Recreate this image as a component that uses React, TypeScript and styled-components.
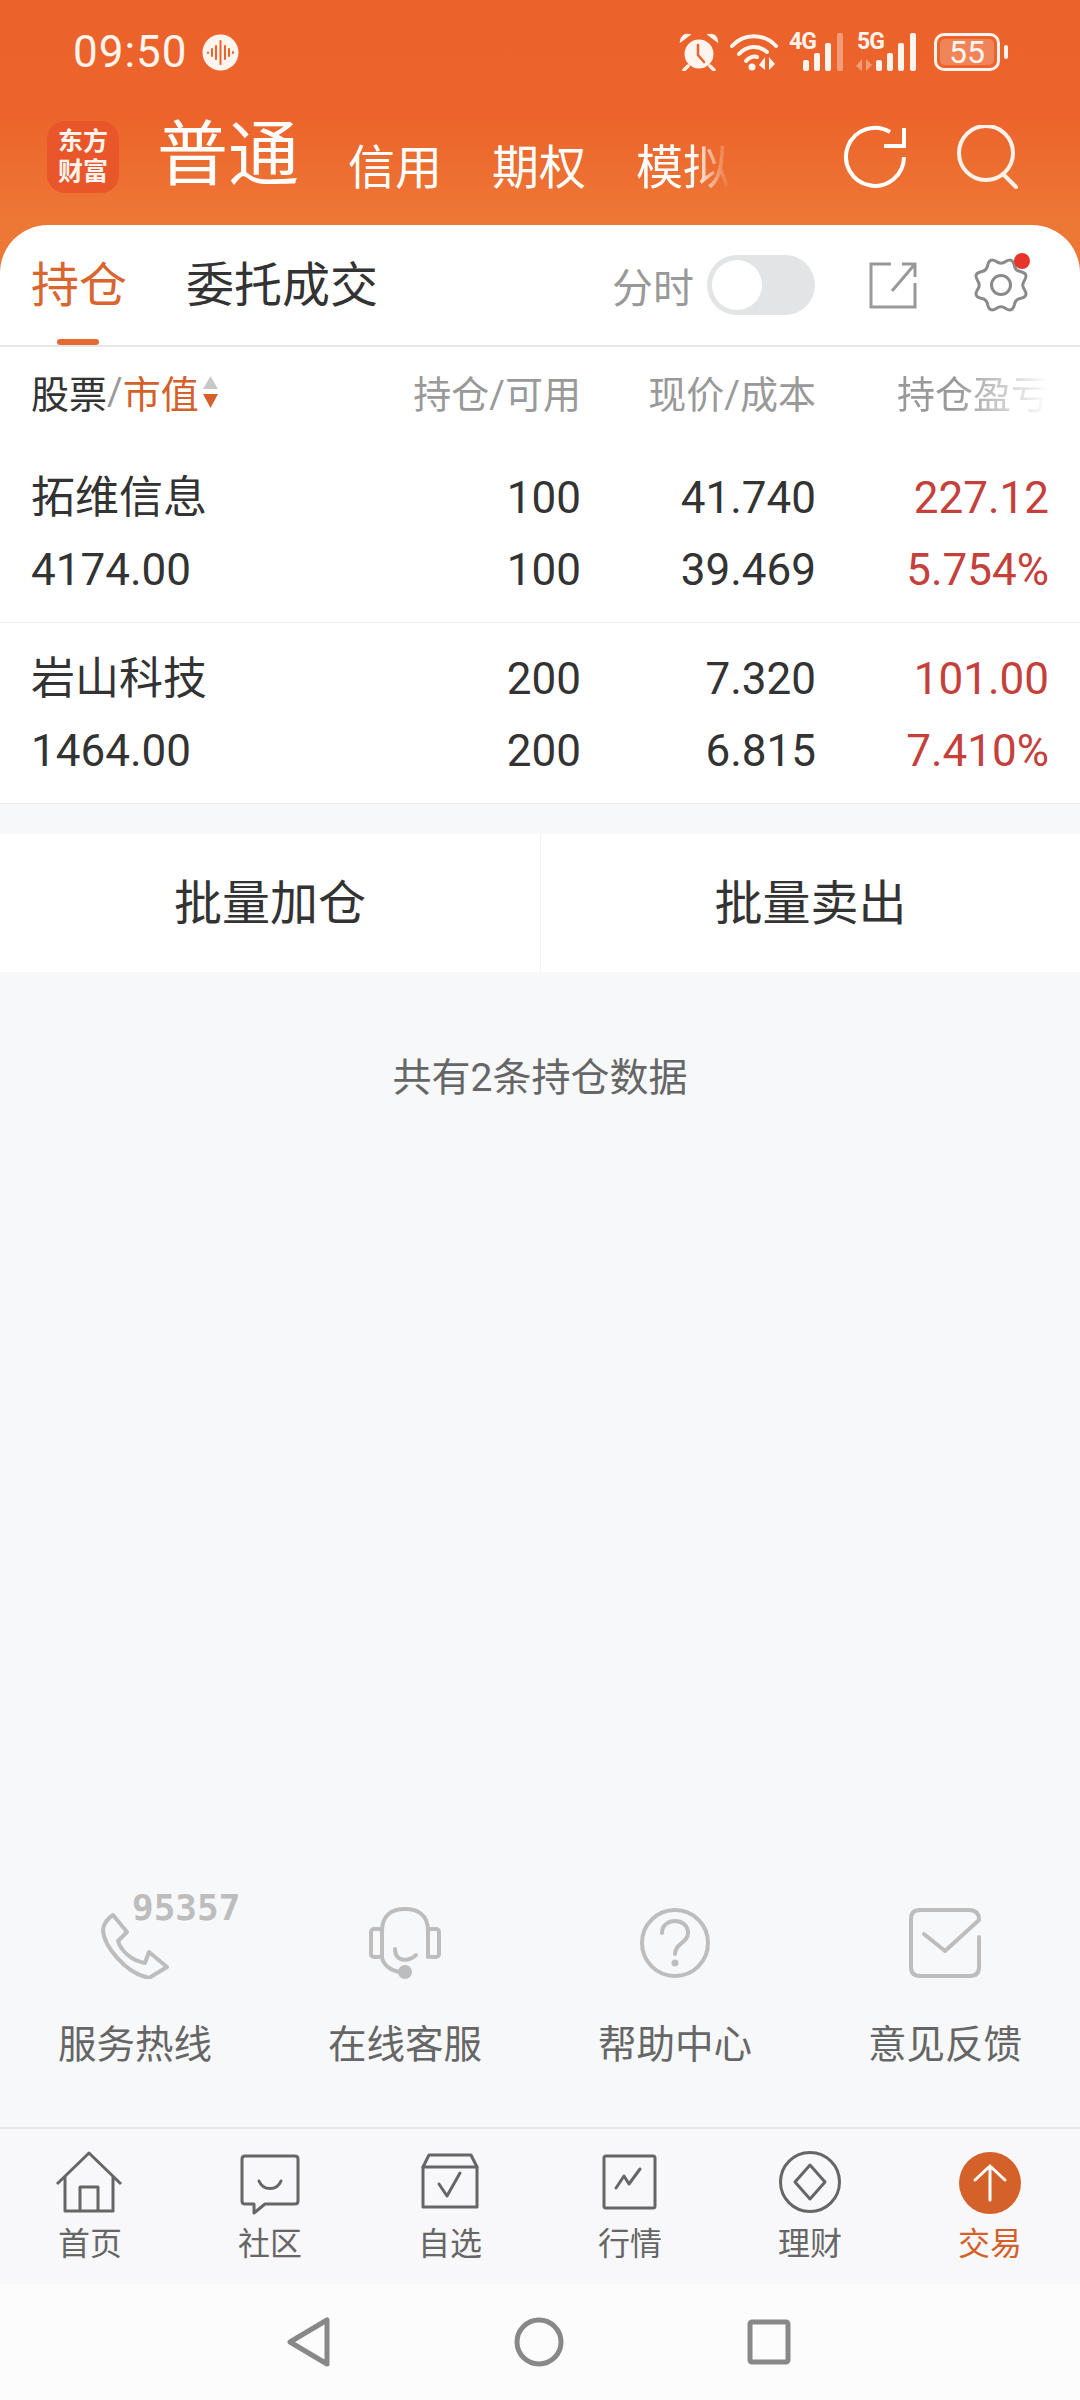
import styled, { createGlobalStyle } from 'styled-components';

const GlobalStyle = createGlobalStyle`
  * { box-sizing: border-box; }
  body {
    margin: 0;
    font-family: Roboto, "Noto Sans CJK SC", sans-serif;
    background: #f7f8fa;
  }
`;

const holdings = [
  { name: '拓维信息', value: '4174.00', hold: '100', free: '100', price: '41.740', cost: '39.469', profit: '227.12', pct: '5.754%' },
  { name: '岩山科技', value: '1464.00', hold: '200', free: '200', price: '7.320', cost: '6.815', profit: '101.00', pct: '7.410%' },
];

// wavy gear outline, notch at the top like the reference
const gearPath = () => {
  const n = 16;
  const pt = (i: number, r: number) => {
    const a = (i * Math.PI * 2) / n - Math.PI / 2;
    return `${(28 + r * Math.cos(a)).toFixed(1)} ${(28 + r * Math.sin(a)).toFixed(1)}`;
  };
  let d = `M${pt(-0.5, 24)}`;
  for (let i = 0; i < n; i++) {
    d += ` Q${pt(i, i % 2 === 0 ? 20 : 30)} ${pt(i + 0.5, 24)}`;
  }
  return d + ' Z';
};

const PhoneIcon = () => (
  <svg width="72" height="72" viewBox="0 0 72 72" fill="none" stroke="#bdbdbd" strokeWidth="4" strokeLinejoin="round">
    <path d="M14 8 L28 25 L19 34 C22 44 33 54 46 56 L50 45 L68 60 L50 71 C26 66 4 38 4 22 Q6 13 14 8 Z" />
  </svg>
);

const HeadsetIcon = () => (
  <svg width="72" height="72" viewBox="0 0 72 72" fill="none" stroke="#bdbdbd" strokeWidth="4" strokeLinecap="round">
    <rect x="2" y="22" width="11" height="28" rx="3" />
    <rect x="59" y="22" width="11" height="28" rx="3" />
    <path d="M13 50 V24 C13 8 23 2 36 2 C49 2 59 8 59 24 V50" />
    <path d="M26 42 C26 54 38 56 47 48" />
    <path d="M13 50 C14 58 22 64 32 65" />
    <circle cx="36" cy="65" r="7" fill="#bdbdbd" stroke="none" />
  </svg>
);

const HelpIcon = () => (
  <svg width="72" height="72" viewBox="0 0 72 72" fill="none" stroke="#bdbdbd" strokeWidth="4" strokeLinecap="round">
    <circle cx="36" cy="36" r="33" />
    <path d="M23 26 C23 10 49 10 49 26 C49 36 36 36 36 47" />
    <circle cx="36" cy="56" r="3.5" fill="#bdbdbd" stroke="none" />
  </svg>
);

const MailIcon = () => (
  <svg width="72" height="72" viewBox="0 0 72 72" fill="none" stroke="#bdbdbd" strokeWidth="4" strokeLinecap="round" strokeLinejoin="round">
    <path d="M70 30 V60 Q70 69 61 69 H11 Q2 69 2 60 V12 Q2 3 11 3 H60 Q70 3 70 13 L36 44 L15 27" />
  </svg>
);

const HomeIcon = () => (
  <svg width="70" height="66" viewBox="0 0 70 66" fill="none" stroke="#666" strokeWidth="3" strokeLinejoin="round">
    <path d="M2 33 L34 2 L66 33" />
    <path d="M10 26 V60 H58 V26" />
    <path d="M25 60 V36 H43 V60" />
  </svg>
);

const ChatIcon = () => (
  <svg width="70" height="66" viewBox="0 0 70 66" fill="none" stroke="#666" strokeWidth="3" strokeLinejoin="round" strokeLinecap="round">
    <path d="M10 5 H60 Q63 5 63 8 V50 Q63 53 60 53 H30 L19 62 V53 H10 Q7 53 7 50 V8 Q7 5 10 5 Z" />
    <path d="M24 30 C28 40 42 40 46 30" />
  </svg>
);

const BoxIcon = () => (
  <svg width="70" height="66" viewBox="0 0 70 66" fill="none" stroke="#666" strokeWidth="3" strokeLinejoin="round" strokeLinecap="round">
    <path d="M8 16 L14 4 H56 L62 16 V56 H8 Z" />
    <path d="M8 16 H62" />
    <path d="M24 33 L32 45 L45 22" />
  </svg>
);

const ChartIcon = () => (
  <svg width="70" height="66" viewBox="0 0 70 66" fill="none" stroke="#666" strokeWidth="3" strokeLinejoin="round" strokeLinecap="round">
    <rect x="9" y="5" width="51" height="52" rx="2" />
    <path d="M21 37 L29 25 L34 33 L45 18" />
  </svg>
);

const FinanceIcon = () => (
  <svg width="70" height="66" viewBox="0 0 70 66" fill="none" stroke="#666" strokeWidth="3" strokeLinejoin="round">
    <circle cx="35" cy="31" r="29.5" />
    <path d="M35 14 L50 31 L35 48 L20 31 Z" />
  </svg>
);

const TradeIcon = () => (
  <svg width="70" height="66" viewBox="0 0 70 66" fill="none" stroke="#fff" strokeWidth="3" strokeLinecap="round">
    <circle cx="35" cy="32" r="31" fill="#d4602a" stroke="none" />
    <path d="M35 49 V15 M20 29 L35 15 L50 29" />
  </svg>
);

const services = [
  { label: '服务热线', icon: <PhoneIcon />, badge: '95357' },
  { label: '在线客服', icon: <HeadsetIcon /> },
  { label: '帮助中心', icon: <HelpIcon /> },
  { label: '意见反馈', icon: <MailIcon /> },
];

const tabs = [
  { label: '首页', icon: <HomeIcon /> },
  { label: '社区', icon: <ChatIcon /> },
  { label: '自选', icon: <BoxIcon /> },
  { label: '行情', icon: <ChartIcon /> },
  { label: '理财', icon: <FinanceIcon /> },
  { label: '交易', icon: <TradeIcon />, active: true },
];

const App = () => {
  return (
    <Page>
      <GlobalStyle />
      <Hero>
        <StatusBar>
          <Clock>09:50</Clock>
          <svg width="37" height="37" viewBox="0 0 37 37">
            <circle cx="18.5" cy="18.5" r="18" fill="#fff4ee" />
            <path d="M6 18.5 V19 M10 15 V22 M14 12 V25 M18.5 7 V30 M23 12 V25 M27 15 V22 M31 18 V19" stroke="#ec622b" strokeWidth="2" strokeLinecap="round" />
          </svg>
          <StatusIcons>
            <svg width="42" height="38" viewBox="0 0 42 38" fill="#fff4ee" stroke="#fff4ee" strokeLinecap="round">
              <circle cx="21" cy="21" r="14.5" stroke="none" />
              <path d="M3 8 Q4 1 11 2 Z M39 8 Q38 1 31 2 Z" strokeWidth="2" />
              <path d="M10 33 L6 37 M32 33 L36 37" strokeWidth="3.5" fill="none" />
              <path d="M20 12 V22 L26 29" stroke="#ec622b" strokeWidth="2.5" fill="none" />
            </svg>
            <svg width="48" height="38" viewBox="0 0 48 38" fill="none" stroke="#fff4ee" strokeWidth="4" strokeLinecap="round">
              <path d="M2 13 C14 0 34 0 46 13" />
              <path d="M9 21 C17 12 29 12 37 19" />
              <path d="M16 28 C19 24 24 23 27 24" />
              <circle cx="22" cy="34" r="3.5" fill="#fff4ee" stroke="none" />
              <path d="M35 24 V37 L29 32 Z M39 24 V37 L45 31 Z" fill="#fff4ee" stroke="none" />
            </svg>
            <Signal $gap={14}>
              <SignalLabel $left={-13}>4G</SignalLabel>
              <svg width="44" height="38" viewBox="0 0 44 38" fill="#fff4ee">
                <rect x="1" y="27" width="6" height="11" rx="2" />
                <rect x="12" y="20" width="6" height="18" rx="2" />
                <rect x="23" y="10" width="6" height="28" rx="2" />
                <rect x="35" y="0" width="6" height="38" rx="2" opacity="0.4" />
              </svg>
            </Signal>
            <Signal $gap={0}>
              <SignalLabel $left={1}>5G</SignalLabel>
              <svg width="62" height="38" viewBox="0 0 62 38" fill="#fff4ee">
                <path d="M6 26 V38 L0 33 Z M10 26 V38 L16 32 Z" opacity="0.4" />
                <rect x="20" y="27" width="6" height="11" rx="2" />
                <rect x="31" y="20" width="6" height="18" rx="2" />
                <rect x="42" y="10" width="6" height="28" rx="2" />
                <rect x="54" y="0" width="6" height="38" rx="2" />
              </svg>
            </Signal>
            <Battery>
              <BatteryLevel>55</BatteryLevel>
            </Battery>
          </StatusIcons>
        </StatusBar>

        <HeaderRow>
          <Logo>东方<br />财富</Logo>
          <MainTitle>普通</MainTitle>
          <TopTab>信用</TopTab>
          <TopTab>期权</TopTab>
          <TopTab $fade>模拟</TopTab>
          <HeaderActions>
            <svg width="64" height="64" viewBox="0 0 64 64" fill="none" stroke="#fff" strokeWidth="4">
              <path d="M61 32 A29 29 0 1 1 47 7" />
              <path d="M61 3 V21 H41" />
            </svg>
            <svg width="64" height="64" viewBox="0 0 64 64" fill="none" stroke="#fff2ea" strokeWidth="4" strokeLinecap="round">
              <circle cx="30" cy="28" r="27" />
              <path d="M47 49 L60 62" />
            </svg>
          </HeaderActions>
        </HeaderRow>

        <TabCard>
          <TabItem $active>持仓<TabMarker /></TabItem>
          <TabItem>委托成交</TabItem>
          <TabTools>
            <ToggleLabel>分时</ToggleLabel>
            <Toggle />
            <ShareButton>
              <svg width="48" height="48" viewBox="0 0 48 48" fill="none" stroke="#999" strokeWidth="3">
                <path d="M22 3 H2 V46 H46 V22" />
                <path d="M47 3 H33 M46 2 V16 M46 3 L23 30" />
              </svg>
            </ShareButton>
            <GearButton>
              <svg width="56" height="56" viewBox="0 0 56 56" fill="none" stroke="#8a8a8a" strokeWidth="3" strokeLinejoin="round">
                <path d={gearPath()} />
                <circle cx="28" cy="28" r="9.5" />
              </svg>
              <RedDot />
            </GearButton>
          </TabTools>
        </TabCard>
      </Hero>

      <Table>
        <ColumnHead>
          <HeadCell $align="left">
            <DarkText>股票</DarkText>/<AccentText>市值</AccentText>
            <SortArrows>
              <svg width="17" height="32" viewBox="0 0 17 32">
                <path d="M8.5 0 L16 13 H1 Z" fill="#c8c8c8" />
                <path d="M1 18 H16 L8.5 32 Z" fill="#d4602a" />
              </svg>
            </SortArrows>
          </HeadCell>
          <HeadCell>持仓/可用</HeadCell>
          <HeadCell>现价/成本</HeadCell>
          <HeadCell $fade>持仓盈亏</HeadCell>
        </ColumnHead>
        {holdings.map((h) => (
          <HoldingRow key={h.name}>
            <StackLeft><NameText>{h.name}</NameText><div>{h.value}</div></StackLeft>
            <Stack><div>{h.hold}</div><div>{h.free}</div></Stack>
            <Stack><div>{h.price}</div><div>{h.cost}</div></Stack>
            <Stack $red><div>{h.profit}</div><div>{h.pct}</div></Stack>
          </HoldingRow>
        ))}
      </Table>

      <BatchBar>
        <BatchButton>批量加仓</BatchButton>
        <BatchButton>批量卖出</BatchButton>
      </BatchBar>

      <CountNote>共有2条持仓数据</CountNote>

      <ServiceRow>
        {services.map((s) => (
          <ServiceItem key={s.label}>
            <ServiceIcon>
              {s.icon}
              {s.badge && <HotlineBadge>{s.badge}</HotlineBadge>}
            </ServiceIcon>
            <ServiceLabel>{s.label}</ServiceLabel>
          </ServiceItem>
        ))}
      </ServiceRow>

      <TabBar>
        {tabs.map((t) => (
          <TabBarItem key={t.label} $active={t.active}>
            {t.icon}
            <span>{t.label}</span>
          </TabBarItem>
        ))}
      </TabBar>

      <NavBar>
        <svg width="44" height="50" viewBox="0 0 44 50" fill="none" stroke="#888" strokeWidth="5" strokeLinejoin="round">
          <path d="M40 3 V47 L3 25 Z" />
        </svg>
        <svg width="50" height="50" viewBox="0 0 50 50" fill="none" stroke="#888" strokeWidth="5">
          <circle cx="25" cy="25" r="22" />
        </svg>
        <svg width="44" height="46" viewBox="0 0 44 46" fill="none" stroke="#888" strokeWidth="5" strokeLinejoin="round">
          <rect x="3" y="3" width="38" height="40" rx="2" />
        </svg>
      </NavBar>
    </Page>
  );
};

export default App;

const Page = styled.div`
  width: 1080px;
  height: 2400px;
  display: flex;
  flex-direction: column;
  background: #f7f8fa;
  overflow: hidden;
`;

const Hero = styled.div`
  background: linear-gradient(180deg, #ec622b 0, #ec632b 110px, #ed7836 225px, #ed7836 100%);
`;

const StatusBar = styled.div`
  height: 104px;
  padding: 0 80px 0 73px;
  display: flex;
  align-items: center;
  gap: 14px;
`;

const Clock = styled.div`
  font-size: 44px;
  letter-spacing: 1px;
  color: #fff4ee;
`;

const StatusIcons = styled.div`
  margin-left: auto;
  display: flex;
  align-items: center;
  gap: 10px;
`;

const Signal = styled.div<{ $gap: number }>`
  position: relative;
  display: flex;
  margin-left: ${(p) => p.$gap}px;
`;

const SignalLabel = styled.span<{ $left: number }>`
  position: absolute;
  left: ${(p) => p.$left}px;
  top: -3px;
  font-size: 23px;
  font-weight: 700;
  letter-spacing: -1px;
  line-height: 24px;
  color: #fff4ee;
`;

const Battery = styled.div`
  position: relative;
  width: 66px;
  height: 38px;
  border: 3px solid #fff4ee;
  border-radius: 10px;
  margin-left: 6px;
  padding: 3px;
  &::after {
    content: '';
    position: absolute;
    right: -11px;
    top: 9px;
    width: 4px;
    height: 14px;
    border-radius: 2px;
    background: #fff4ee;
  }
`;

const BatteryLevel = styled.div`
  width: 100%;
  height: 100%;
  border-radius: 5px;
  background: rgba(255, 255, 255, 0.22);
  color: #fff4ee;
  font-size: 32px;
  line-height: 26px;
  text-align: center;
`;

const HeaderRow = styled.div`
  height: 121px;
  padding: 17px 60px 32px 47px;
  display: flex;
  align-items: flex-end;
`;

const Logo = styled.div`
  width: 72px;
  height: 72px;
  border-radius: 18px;
  background: #e8562a;
  color: #fff4ee;
  font-size: 25px;
  font-weight: 700;
  line-height: 30px;
  text-align: center;
  padding-top: 6px;
  margin-right: 38px;
`;

const MainTitle = styled.div`
  font-size: 71px;
  line-height: 76px;
  color: #fff;
  margin-right: 49px;
`;

const TopTab = styled.div<{ $fade?: boolean }>`
  font-size: 47px;
  line-height: 50px;
  color: #fff;
  margin-right: 50px;
  ${(p) => p.$fade && 'mask-image: linear-gradient(90deg, #000 60%, transparent 100%);'}
`;

const HeaderActions = styled.div`
  margin-left: auto;
  display: flex;
  gap: 49px;
  align-self: center;
`;

const TabCard = styled.div`
  position: relative;
  height: 122px;
  padding: 0 51px 0 31px;
  display: flex;
  align-items: flex-start;
  gap: 59px;
  background: #fff;
  border-radius: 48px 48px 0 0;
  border-bottom: 2px solid #e6e6e6;
`;

const TabItem = styled.div<{ $active?: boolean }>`
  position: relative;
  font-size: 48px;
  line-height: 56px;
  margin-top: 33px;
  color: ${(p) => (p.$active ? '#d9652f' : '#333')};
`;

const TabMarker = styled.div`
  position: absolute;
  left: 26px;
  top: 81px;
  width: 42px;
  height: 6px;
  border-radius: 3px;
  background: #e56a34;
`;

const TabTools = styled.div`
  margin-left: auto;
  height: 120px;
  display: flex;
  align-items: center;
`;

const ToggleLabel = styled.div`
  font-size: 41px;
  color: #999;
  margin-right: 13px;
`;

const Toggle = styled.div`
  width: 108px;
  height: 60px;
  border-radius: 30px;
  background: #e3e4e6;
  padding: 5px;
  margin-right: 54px;
  &::before {
    content: '';
    display: block;
    width: 50px;
    height: 50px;
    border-radius: 50%;
    background: #fff;
  }
`;

const ShareButton = styled.div`
  display: flex;
  margin-right: 56px;
`;

const GearButton = styled.div`
  position: relative;
  display: flex;
`;

const RedDot = styled.div`
  position: absolute;
  right: -1px;
  top: -4px;
  width: 16px;
  height: 16px;
  border-radius: 50%;
  background: #e8352a;
`;

const Table = styled.div`
  background: #fff;
  border-bottom: 1px solid #ececec;
`;

const gridColumns = '350px 200px 235px 233px';

const ColumnHead = styled.div`
  height: 95px;
  padding: 0 31px 6px 31px;
  display: grid;
  grid-template-columns: ${gridColumns};
  align-items: center;
`;

const HeadCell = styled.div<{ $align?: string; $fade?: boolean }>`
  display: flex;
  align-items: center;
  justify-content: ${(p) => (p.$align === 'left' ? 'flex-start' : 'flex-end')};
  font-size: 38px;
  color: #999;
  ${(p) => p.$fade && 'mask-image: linear-gradient(90deg, #000 60%, transparent 100%);'}
`;

const DarkText = styled.span`
  color: #333;
`;

const AccentText = styled.span`
  color: #d4602a;
`;

const SortArrows = styled.span`
  display: flex;
  margin-left: 3px;
`;

const HoldingRow = styled.div`
  padding: 20px 31px 16px 31px;
  display: grid;
  grid-template-columns: ${gridColumns};
  border-bottom: 1px solid #efefef;
  &:last-child {
    border-bottom: none;
  }
`;

const Stack = styled.div<{ $red?: boolean }>`
  font-size: 44px;
  line-height: 72px;
  text-align: right;
  color: ${(p) => (p.$red ? '#c5403b' : '#333')};
`;

const StackLeft = styled(Stack)`
  text-align: left;
`;

const NameText = styled.div`
  font-size: 44px;
`;

const BatchBar = styled.div`
  margin-top: 30px;
  height: 138px;
  display: grid;
  grid-template-columns: 1fr 1fr;
  background: #fff;
`;

const BatchButton = styled.div`
  display: flex;
  align-items: center;
  justify-content: center;
  padding-bottom: 8px;
  font-size: 48px;
  color: #333;
  & + & {
    border-left: 1px solid #f2f2f2;
  }
`;

const CountNote = styled.div`
  margin-top: 81px;
  text-align: center;
  font-size: 39px;
  line-height: 50px;
  color: #666;
`;

const ServiceRow = styled.div`
  margin-top: auto;
  padding-bottom: 59px;
  display: grid;
  grid-template-columns: repeat(4, 1fr);
`;

const ServiceItem = styled.div`
  display: flex;
  flex-direction: column;
  align-items: center;
`;

const ServiceIcon = styled.div`
  position: relative;
  height: 72px;
  margin-top: -3px;
  margin-bottom: 43px;
`;

const HotlineBadge = styled.span`
  position: absolute;
  left: 33px;
  top: -17px;
  font-family: "DejaVu Sans Mono", monospace;
  font-size: 36px;
  font-weight: 700;
  line-height: 36px;
  color: #bdbdbd;
`;

const ServiceLabel = styled.div`
  font-size: 38.5px;
  line-height: 46px;
  color: #666;
`;

const TabBar = styled.div`
  height: 157px;
  padding-top: 22px;
  display: grid;
  grid-template-columns: repeat(6, 1fr);
  border-top: 2px solid #e8e8e8;
  background: #f8f8fa;
`;

const TabBarItem = styled.div<{ $active?: boolean }>`
  display: flex;
  flex-direction: column;
  align-items: center;
  font-size: 32px;
  line-height: 38px;
  color: ${(p) => (p.$active ? '#d4602a' : '#666')};
  span {
    margin-top: 8px;
  }
`;

const NavBar = styled.div`
  height: 116px;
  padding-left: 287px;
  display: flex;
  align-items: center;
  gap: 183px;
  background: #fcfcfc;
`;
